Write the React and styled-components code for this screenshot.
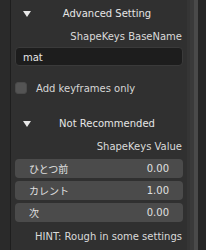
import React from 'react'
import styled, { createGlobalStyle } from 'styled-components'

const GlobalStyle = createGlobalStyle`
  html, body {
    margin: 0;
    padding: 0;
    background: #262626;
  }
  body {
    font-family: 'DejaVu Sans', 'Noto Sans CJK JP', sans-serif;
    -webkit-font-smoothing: antialiased;
  }
`

const Screen = styled.div`
  display: flex;
  width: 206px;
  height: 250px;
  overflow: hidden;
`

const Gutter = styled.div`
  width: 10px;
  background: #2a2a2a;
  border-right: 1px solid #1e1e1e;
`

const Panel = styled.div`
  flex: 1;
  display: flex;
  flex-direction: column;
  background: #303030;
  padding: 1px 4px 0;
  color: #e2e2e2;
  font-size: 10px;
`

const Strip = styled.div`
  width: ${({ w }) => w}px;
  background: ${({ bg }) => bg};
`

const Header = styled.div`
  display: flex;
  align-items: center;
  height: 25px;
  margin-top: ${({ top }) => top || 0}px;
  padding-left: 8px;
`

const Arrow = styled.span`
  width: 0;
  height: 0;
  border-left: 4px solid transparent;
  border-right: 4px solid transparent;
  border-top: 6px solid #e8e8e8;
`

const HeaderTitle = styled.span`
  flex: 1;
  text-align: center;
  color: #e6e6e6;
`

const Label = styled.div`
  text-align: right;
  height: 20px;
  line-height: 22px;
  padding-right: 1px;
  color: #dadada;
`

const TextField = styled.div`
  height: 19px;
  line-height: 19px;
  margin-top: ${({ top }) => top || 0}px;
  border-radius: 4px;
  background: #1d1d1d;
  border: 1px solid #3a3a3a;
  box-sizing: border-box;
  padding-left: 7px;
  color: #e6e6e6;
`

const CheckRow = styled.label`
  display: flex;
  align-items: center;
  gap: 9px;
  height: 20px;
  margin-top: 12px;
  color: #d6d6d6;
`

const Box = styled.span`
  width: 12px;
  height: 12px;
  border-radius: 3px;
  background: #545454;
  border: 1px solid #4a4a4a;
  box-sizing: border-box;
`

const Rows = styled.div`
  display: flex;
  flex-direction: column;
  gap: 3px;
  margin-top: 3px;
`

const ValueRow = styled.div`
  display: flex;
  justify-content: space-between;
  align-items: center;
  height: 19px;
  border-radius: 4px;
  background: #4b4b4b;
  padding: 0 14px;
  color: #e0e0e0;
`

const Hint = styled.div`
  text-align: right;
  margin-top: 6px;
  height: 18px;
  line-height: 18px;
  padding-right: 1px;
  color: #dadada;
`

const values = [
  { name: 'ひとつ前', value: '0.00' },
  { name: 'カレント', value: '1.00' },
  { name: '次', value: '0.00' },
]

export default function App() {
  return (
    <Screen>
      <GlobalStyle />
      <Gutter />
      <Panel>
        <Header>
          <Arrow />
          <HeaderTitle>Advanced Setting</HeaderTitle>
        </Header>
        <Label>ShapeKeys BaseName</Label>
        <TextField top={1}>mat</TextField>
        <CheckRow>
          <Box />
          Add keyframes only
        </CheckRow>
        <Header top={13}>
          <Arrow />
          <HeaderTitle>Not Recommended</HeaderTitle>
        </Header>
        <Label>ShapeKeys Value</Label>
        <Rows>
          {values.map(v => (
            <ValueRow key={v.name}>
              <span>{v.name}</span>
              <span>{v.value}</span>
            </ValueRow>
          ))}
        </Rows>
        <Hint>HINT: Rough in some settings</Hint>
      </Panel>
      <Strip w={3} bg="#353535" />
      <Strip w={4} bg="#3a3a3a" />
      <Strip w={4} bg="#4a4a4a" />
      <Strip w={8} bg="#262626" />
    </Screen>
  )
}
